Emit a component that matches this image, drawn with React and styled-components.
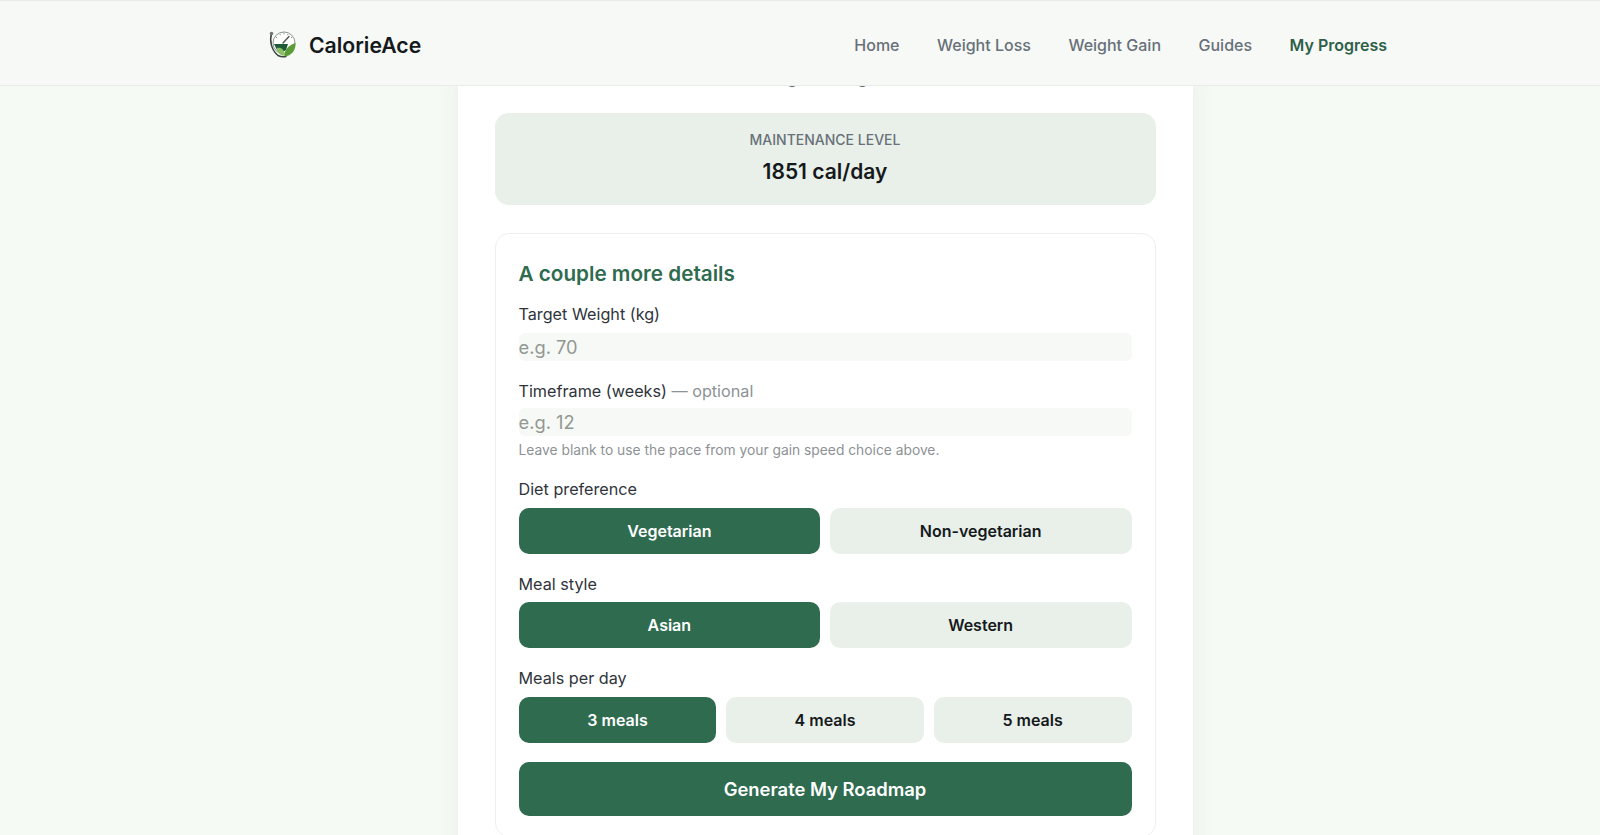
import styled, {createGlobalStyle} from 'styled-components';

const GlobalStyle = createGlobalStyle`
    html, body {
        margin: 0;
        padding: 0;
        height: 835px;
        overflow: hidden;
        background: #f6faf5;
    }

    * {
        box-sizing: border-box;
    }
`;

const Page = styled.div`
    width: 1650px;
    height: 835px;
    overflow: hidden;
    font-family: Inter, "Liberation Sans", sans-serif;
    color: #15191c;
`;

const Header = styled.header`
    position: relative;
    z-index: 2;
    height: 86px;
    background: #f6f9f5;
    border-top: 1px solid #e8ece7;
    border-bottom: 1px solid #e8ece7;
`;

const HeaderInner = styled.div`
    width: 1124px;
    height: 84px;
    margin: 0 auto;
    padding: 3px 0 0 5px;
    display: flex;
    align-items: center;
    justify-content: space-between;
`;

const Brand = styled.a`
    display: flex;
    align-items: center;
    gap: 11px;
    font-size: 21.2px;
    font-weight: 600;
    color: #15191c;
`;

const Nav = styled.nav`
    display: flex;
    gap: 37.5px;
`;

const NavLink = styled.a`
    font-size: 16px;
    font-weight: ${({$active}) => ($active ? 600 : 500)};
    color: ${({$active}) => ($active ? '#2f5f49' : '#68707a')};
`;

const Main = styled.main`
    width: 735px;
    height: 800px;
    margin: 0 auto;
    padding: 0 37px;
    background: #fff;
    box-shadow: 0 0 24px rgba(40, 70, 50, 0.06);
`;

const Subtitle = styled.p`
    margin: -17px 0 0;
    height: 44px;
    font-size: 15px;
    line-height: 20px;
    text-align: center;
    color: #68707a;
`;

const Summary = styled.div`
    height: 92px;
    border-radius: 14px;
    background: #e9f0e9;
    display: flex;
    flex-direction: column;
    align-items: center;
    padding-top: 18px;
`;

const SummaryLabel = styled.div`
    font-size: 14px;
    line-height: 18px;
    font-weight: 500;
    color: #68707a;
    text-transform: uppercase;
`;

const SummaryValue = styled.div`
    margin-top: 9px;
    font-size: 21px;
    line-height: 28px;
    font-weight: 600;
    color: #15191c;
`;

const DetailsCard = styled.section`
    margin-top: 28px;
    padding: 26px 23px 18px;
    height: 604px;
    border: 1px solid #edf1ec;
    border-radius: 14px;
    background: #fff;
`;

const Heading = styled.h2`
    margin: 0;
    font-size: 20.7px;
    line-height: 28px;
    font-weight: 600;
    color: #2f6b4f;
`;

const Field = styled.div`
    margin-top: ${({$gap}) => $gap}px;
`;

const Label = styled.label`
    display: block;
    font-size: 16.2px;
    line-height: 20px;
    font-weight: 400;
    color: #2f343b;
    margin-bottom: ${({$gap = 9}) => $gap}px;
`;

const Optional = styled.span`
    color: #8d9296;
`;

const Input = styled.input`
    display: block;
    width: 100%;
    height: 28px;
    padding: 0;
    border: none;
    outline: none;
    border-radius: 6px;
    background: #f6f9f5;
    font-family: inherit;
    font-size: 18.3px;

    &::placeholder {
        color: #929892;
        opacity: 1;
    }
`;

const Hint = styled.p`
    margin: 5px 0 0;
    font-size: 13.8px;
    line-height: 18px;
    color: #8d9296;
`;

const Choices = styled.div`
    display: grid;
    grid-template-columns: repeat(${({$count}) => $count}, 1fr);
    gap: 9.6px;
`;

const Choice = styled.button`
    height: 46px;
    border: none;
    border-radius: 10px;
    background: ${({$active}) => ($active ? '#2f6b4f' : '#e9f0e9')};
    color: ${({$active}) => ($active ? '#fff' : '#15191c')};
    font-family: inherit;
    font-size: 16px;
    font-weight: 600;
`;

const Submit = styled.button`
    display: block;
    width: 100%;
    height: 54px;
    margin-top: 19px;
    border: none;
    border-radius: 10px;
    background: #2f6b4f;
    color: #fff;
    font-family: inherit;
    font-size: 18.4px;
    font-weight: 600;
`;

const Logo = () => (
    <svg width="30" height="30" viewBox="0 0 30 30" aria-hidden="true">
        <circle cx="16" cy="13" r="11" fill="#fff" stroke="#8a968e" strokeWidth="1"/>
        <path d="M8 7l1 1M12 4l.5 1.2M16 3v1.400M20 4l-.5 1.200M24 7l-1 1" stroke="#8a968e" strokeWidth="1"/>
        <path d="M15 13L21 6.500" stroke="#4d5a52" strokeWidth="1.400" strokeLinecap="round"/>
        <path d="M6 14h14l-2 6c-3 2-7 2-9 0z" fill="#1f5a38"/>
        <path d="M3.500 4C1.500 10 3 20 10 25.500c3 1.500 6 1.500 8 1" fill="none" stroke="#39423c" strokeWidth="1.500" strokeLinecap="round"/>
        <circle cx="3.500" cy="3.500" r="1.800" fill="#6d7a72"/>
        <path d="M27.500 13c.5 7-4 13-11 13.500-1-5 3-11 11-13.500z" fill="#5b9c37"/>
        <path d="M9 18c4-1 7 1 8 7.500-4 .5-8-2.500-8-7.500z" fill="#8cc063"/>
    </svg>
);

const App = () => (
    <Page>
        <GlobalStyle/>
        <Header>
            <HeaderInner>
                <Brand><Logo/>CalorieAce</Brand>
                <Nav>
                    <NavLink>Home</NavLink>
                    <NavLink>Weight Loss</NavLink>
                    <NavLink>Weight Gain</NavLink>
                    <NavLink>Guides</NavLink>
                    <NavLink $active>My Progress</NavLink>
                </Nav>
            </HeaderInner>
        </Header>
        <Main>
            <Subtitle>Tracking true weight now</Subtitle>
            <Summary>
                <SummaryLabel>Maintenance level</SummaryLabel>
                <SummaryValue>1851 cal/day</SummaryValue>
            </Summary>
            <DetailsCard>
                <Heading>A couple more details</Heading>
                <Field $gap={16}>
                    <Label>Target Weight (kg)</Label>
                    <Input placeholder="e.g. 70"/>
                </Field>
                <Field $gap={20}>
                    <Label $gap={7}>Timeframe (weeks) <Optional>— optional</Optional></Label>
                    <Input placeholder="e.g. 12"/>
                    <Hint>Leave blank to use the pace from your gain speed choice above.</Hint>
                </Field>
                <Field $gap={20}>
                    <Label>Diet preference</Label>
                    <Choices $count={2}>
                        <Choice $active>Vegetarian</Choice>
                        <Choice>Non-vegetarian</Choice>
                    </Choices>
                </Field>
                <Field $gap={20}>
                    <Label $gap={8}>Meal style</Label>
                    <Choices $count={2}>
                        <Choice $active>Asian</Choice>
                        <Choice>Western</Choice>
                    </Choices>
                </Field>
                <Field $gap={20}>
                    <Label>Meals per day</Label>
                    <Choices $count={3}>
                        <Choice $active>3 meals</Choice>
                        <Choice>4 meals</Choice>
                        <Choice>5 meals</Choice>
                    </Choices>
                </Field>
                <Submit>Generate My Roadmap</Submit>
            </DetailsCard>
        </Main>
    </Page>
);

export default App;
